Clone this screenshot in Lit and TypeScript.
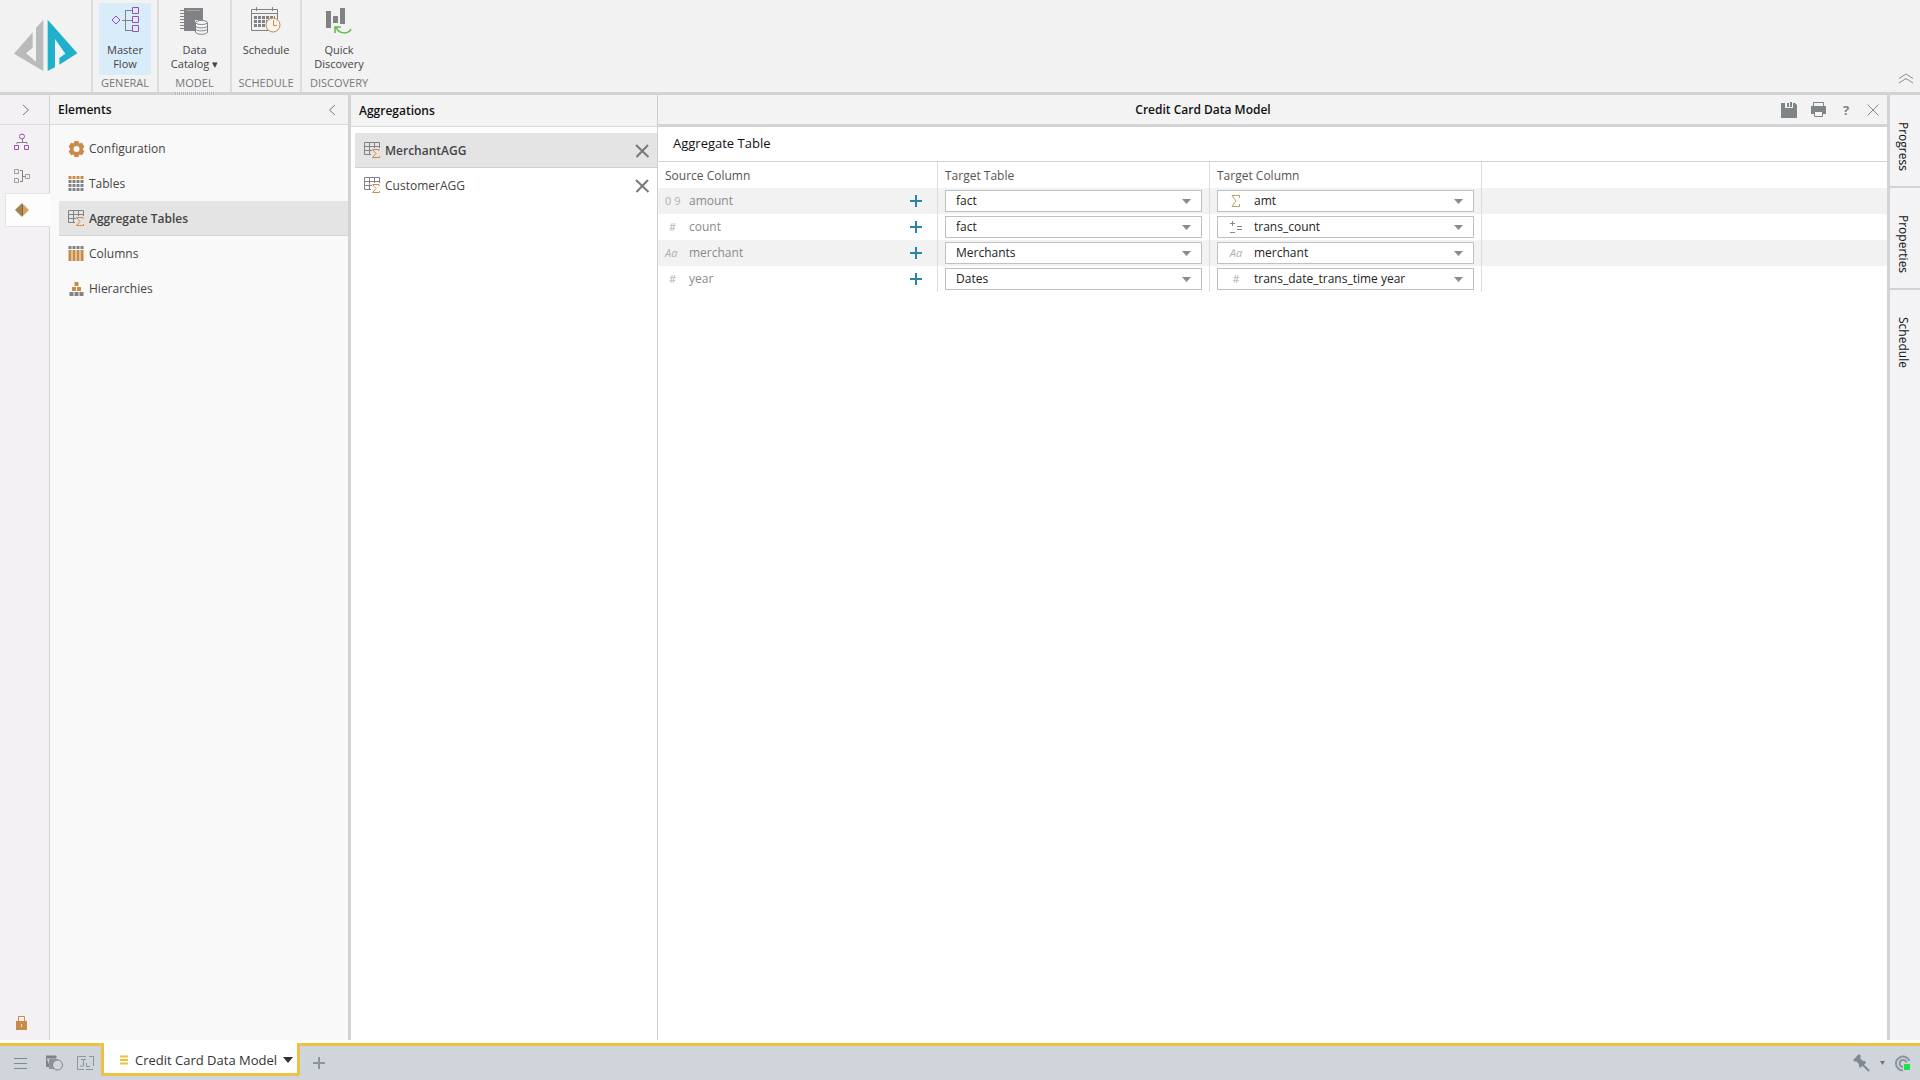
import { LitElement, html, css, svg, nothing } from "lit";
import { customElement, state } from "lit/decorators.js";
import { classMap } from "lit/directives/class-map.js";

const icon = (w: number, h: number, body: unknown) =>
  html`<svg width=${w} height=${h} viewBox="0 0 ${w} ${h}" fill="none" aria-hidden="true">${body}</svg>`;

const G = "#808285";
const O = "#c98b45";
const P = "#9c4fb0";

const logo = html`<svg width="64" height="54" viewBox="0 0 192 160" aria-hidden="true">
  <path fill="#b9babc" d="M0 106 L56 42 V88 L36 105 L66 130 V29 L88 4 V158 Z" />
  <path fill="#1fb1cb" d="M101 4 L190 105 L136 139 V119 L154 106 L123 62 V147 L101 158 Z" />
</svg>`;

const masterFlow = icon(28, 28, svg`
  <path d="M5 9 L9 13 L5 17 L1 13Z" stroke=${P} />
  <path d="M11 13.5H21M14.5 3V24M14 3.5H21M14 23.5H21" stroke=${G} />
  <path d="M21.500 .5h6v6h-6zM21.500 9.500h6v6h-6zM21.500 18.500h6v6h-6z" stroke=${P} />`);

const catalog = icon(30, 28, svg`
  <path d="M4 1H23V13H15V24H4Z" fill=${G} />
  <path d="M7 3.500H20" stroke="#a4a6a8" />
  <path d="M0 3.500H4M0 6.500H4M0 9.500H4M0 12.500H4M0 15.500H4M0 18.500H4M0 21.500H4" stroke=${G} />
  <path d="M15.500 15.500V25C16 28 27 28 27.500 25V15.500" fill="#f4f5f6" stroke=${G} />
  <ellipse cx="21.500" cy="15.500" rx="6" ry="2" fill="#f4f5f6" stroke=${G} />
  <path d="M15.500 19C16 21.500 27 21.500 27.500 19M15.500 22C16 24.500 27 24.500 27.500 22" stroke=${G} />`);

const calendar = icon(30, 26, svg`
  <path d="M.5 2.500H26.500V23.500H.5ZM.5 6.500H26.500M5.500 0V4M21.500 0V4" stroke=${G} />
  <path d="M3 10.500H24M3 14.500H24M3 18.500H18" stroke=${G} stroke-width="3" stroke-dasharray="3 1" />
  <circle cx="22" cy="18" r="7" fill="#f7f5f2" stroke=${O} />
  <path d="M22.500 13V18.500H26" stroke=${O} />`);

const discovery = icon(28, 28, svg`
  <path d="M1 4H6V21H1ZM8 9H13V16H8ZM15 1H20V17H15Z" fill=${G} />
  <path d="M11 20C14 28 24 27 26 22M10 26V20H16" stroke="#62b84a" stroke-width="1.500" />`);

const gear = icon(16, 16, svg`
  <path d="M6 0H10L10.800 2.500L13.500 1.800L15.800 5.500L14.200 8L15.800 10.500L13.500 14.200L10.800 13.500L10 16H6L5.200 13.500L2.500 14.200L.2 10.500L1.800 8L.2 5.500L2.500 1.800L5.200 2.500Z" fill=${O} />
  <circle cx="8" cy="8" r="3" fill="#fafafa" />`);

const grid = icon(16, 16, svg`
  <path d="M0 1.500H15" stroke=${O} stroke-width="3" stroke-dasharray="3 1" />
  <path d="M0 5.500H15M0 9.500H15M0 13.500H15" stroke=${G} stroke-width="3" stroke-dasharray="3 1" />`);

const aggTable = icon(17, 17, svg`
  <path d="M.5 .5H15.500V6M.5 .5V12.500H7M.5 4.500H15.500M.5 8.500H8M5.500 .5V12.500M10.500 .5V6" stroke=${G} />
  <path d="M15 9V7.500H8.500L12 11.500L8.500 15.500H15.500V14" stroke=${O} />`);

const columns = icon(16, 16, svg`
  <path d="M0 1.500H15" stroke=${G} stroke-width="3" stroke-dasharray="3 1" />
  <path d="M0 9.500H15" stroke=${O} stroke-width="11" stroke-dasharray="3 1" />`);

const hierarchy = icon(16, 16, svg`
  <path d="M6 1H10V5H6ZM3.500 6H7.500V10H3.500ZM8.500 6H12.500V10H8.500Z" fill=${O} />
  <path d="M1 11H5V15H1ZM6 11H10V15H6ZM11 11H15V15H11Z" fill=${G} />`);

const flowIcon = icon(16, 18, svg`
  <circle cx="8" cy="3.500" r="2.500" stroke=${P} />
  <path d="M8.500 6V9M3 11V9.500H13V11" stroke=${G} />
  <path d="M.5 12.500H4.500V16.500H.5ZM10.500 12.500H14.500V16.500H10.500Z" stroke=${P} />`);

const joinIcon = icon(17, 16, svg`
  <path d="M.5 1.500H4.500V5.500H.5ZM.5 10.500H4.500V14.500H.5ZM11.500 6.500H15.500V10.500H11.500Z" stroke="#a89a8c" />
  <path d="M6 2.500H8.500V13.500H6M8.500 8.500H11" stroke=${G} />`);

const modelIcon = icon(14, 14, svg`
  <path d="M7 0V14L0 7Z" fill="#a3824f" /><path d="M7 0L10 7L7 14Z" fill="#6b6a55" /><path d="M8 1L14 7L8 13Z" fill="#dba15c" />`);

const lock = icon(12, 14, svg`
  <path d="M2.500 5V.5H8.500V5" stroke=${O} /><path d="M0 5H11V14H0Z" fill=${O} /><path d="M5 8H6V11H5Z" fill="#f6e6d2" />`);

const cross = icon(15, 14, svg`
  <path d="M1 1L13.500 13M13 1L1.500 13" stroke="#77797b" stroke-width="2" />`);

const plus = icon(12, 12, svg`<path d="M6 0V12M0 6H12" stroke="#2c82ab" stroke-width="2" />`);
const caret = icon(9, 5, svg`<path d="M0 0H9L4.500 5Z" fill="#8b8b8b" />`);
const chevron = (d: string) => icon(8, 12, svg`<path d=${d} stroke="#77797b" />`);

const save = icon(17, 16, svg`
  <path d="M0 1H4V6H12V1H14L16 3V16H0Z" fill="#7d8587" /><path d="M6 1H8V5H6ZM9 0H11V5H9Z" fill="#7d8587" />`);
const print = icon(17, 15, svg`
  <path d="M3.500 4V.5H13.500V4" stroke="#7d8587" />
  <path d="M1 4H16V12H1Z" fill="#7d8587" /><path d="M4.500 9.500H12.500V14.500H4.500Z" fill="#f4f4f5" stroke="#7d8587" />`);

const windows = icon(17, 16, svg`
  <path d="M0 1H10V3H0ZM.5 3V11.500H4" stroke=${G} fill=${G} />
  <path d="M3 4H12V9L9 14H3Z" fill="#8d949c" />
  <circle cx="11.500" cy="10" r="5" fill="#d0d5dc" stroke=${G} />`);
const frame = icon(17, 15, svg`
  <path d="M.5 .5H9M12 .5H16.500V10M.5 .5V13.500H7M4 3.500H9M6.500 3.500V10H3M9.500 7V10.500H13M9 13.500H16" stroke="#8d949c" />`);
const pin = icon(18, 18, svg`
  <path d="M1 6L7 0L9 2L8 4L11 7L13 7L14 9L8 14L7 12V10L4 7L3 8Z" fill="#808891" />
  <path d="M11 11L17 17" stroke="#808891" stroke-width="2" />`);
const status = icon(16, 17, svg`
  <path d="M14.500 6A7 7 0 1 0 8 15.500M11.500 7.500A3.500 3.500 0 1 0 8 12" stroke="#8d949c" stroke-width="2" />
  <path d="M9 9H15V15H9Z" fill="#22e04a" />`);

const sigma = icon(10, 12, svg`<path d="M8.500 3V.5H1L5 6L1 11.500H8.500V9" stroke="#b5a567" />`);
const calc = icon(13, 12, svg`<path d="M2.500 0V5M0 2.500H5M0 11.500H5M7 5.500H12M7 8.500H12" stroke="#8f8778" />`);

const types: Record<string, unknown> = {
  num: html`<span class="glyph">0 9</span>`,
  hash: html`<span class="glyph hash">#</span>`,
  text: html`<span class="glyph slant">Aa</span>`,
  sum: sigma,
  calc,
};

const rows = [
  { name: "amount", type: "num", table: "fact", column: "amt", kind: "sum" },
  { name: "count", type: "hash", table: "fact", column: "trans_count", kind: "calc" },
  { name: "merchant", type: "text", table: "Merchants", column: "merchant", kind: "text" },
  { name: "year", type: "hash", table: "Dates", column: "trans_date_trans_time year", kind: "hash" },
];

const elements = [
  { label: "Configuration", icon: gear },
  { label: "Tables", icon: grid },
  { label: "Aggregate Tables", icon: aggTable },
  { label: "Columns", icon: columns },
  { label: "Hierarchies", icon: hierarchy },
];

const ribbon = [
  { group: "GENERAL", lines: ["Master", "Flow"], icon: masterFlow, active: true, menu: false },
  { group: "MODEL", lines: ["Data", "Catalog"], icon: catalog, active: false, menu: true },
  { group: "SCHEDULE", lines: ["Schedule"], icon: calendar, active: false, menu: false },
  { group: "DISCOVERY", lines: ["Quick", "Discovery"], icon: discovery, active: false, menu: false },
];

@customElement("app-root")
export class AppRoot extends LitElement {
  @state() private element = "Aggregate Tables";
  @state() private aggregation = "MerchantAGG";

  static styles = css`
    :host {
      --line: #d3d3d5;
      --bar: #f3f3f4;
      display: flex;
      flex-direction: column;
      height: 100vh;
      overflow: hidden;
      background: #fff;
      color: #333;
      font: 12px/16px "Open Sans", "Noto Sans", sans-serif;
    }
    * { box-sizing: border-box; }
    svg { display: block; flex: none; }
    button, select { font: inherit; color: inherit; }
    button { background: none; border: 0; padding: 0; cursor: pointer; }
    h1, h2, h3 { margin: 0; font-size: 12px; font-weight: 500; color: #111; }

    .ribbon { display: flex; height: 95px; background: #f2f2f3; border-bottom: 3px solid var(--line); flex: none; }
    .logo { width: 93px; padding: 18px 0 0 14px; border-right: 2px solid #dcdcdd; }
    .group { position: relative; display: flex; flex-direction: column; align-items: center; padding: 3px 4px 0; border-right: 2px solid #dcdcdd; }
    .group.w0 { width: 66px; }
    .group.w1 { width: 73px; }
    .group.w2 { width: 70px; }
    .group.w3 { width: 74px; border-right: 0; }
    .tool { display: flex; flex-direction: column; align-items: center; width: 52px; height: 72px; padding-top: 4px; font-size: 11px; line-height: 14px; color: #444; white-space: nowrap; }
    .tool.active { background: #d9ecfa; }
    .pic { height: 36px; }
    .group-name { font-size: 11px; line-height: 16px; color: #777; white-space: nowrap; }
    .fold { margin: auto 6px 0 auto; padding-bottom: 8px; }
    .grip { position: absolute; bottom: -3px; width: 40px; height: 3px; background: repeating-linear-gradient(90deg, #b5b5b7 0 1px, #e4e4e6 1px 2px); }

    .body { display: flex; flex: 1; min-height: 0; padding-bottom: 3px; }
    .rail { width: 50px; flex: none; display: flex; flex-direction: column; background: #f3f1f4; border-right: 1px solid var(--line); }
    .rail button { display: flex; align-items: center; height: 34px; padding-left: 14px; }
    .rail .open { height: 30px; padding-left: 22px; border-bottom: 1px solid #dedee0; }
    .rail .on { height: 34px; margin-left: 5px; padding-left: 9px; background: #fdfdfd; border: 1px solid #e4e4e6; border-right: 0; margin-right: -1px; }
    .rail .lock { margin-top: auto; padding-left: 16px; }

    .panel { display: flex; flex-direction: column; flex: none; }
    .elements { width: 301px; background: #f9f9fa; border-right: 3px solid var(--line); }
    .aggregations { width: 307px; background: #fff; border-right: 1px solid #cfcfd1; }
    .head { display: flex; align-items: center; justify-content: space-between; height: 30px; padding: 0 12px 0 8px; background: var(--bar); border-bottom: 1px solid #d8d8da; }
    .head h2 { font-weight: 600; }
    .aggregations .head { height: 32px; }
    .list { list-style: none; margin: 0; padding: 6px 0 0 9px; }
    .aggregations .list { padding-left: 4px; }
    .list li { display: flex; align-items: center; height: 35px; padding: 0 7px 0 9px; }
    .list li.on { background: #e4e4e5; box-shadow: inset 0 -1px #d2d2d4; font-weight: 600; }
    .pick { display: flex; align-items: center; gap: 4px; flex: 1; height: 100%; text-align: left; color: #444; }
    .pick svg { width: 17px; }

    .main { display: flex; flex-direction: column; flex: 1; min-width: 0; border-right: 3px solid var(--line); }
    .title { display: flex; align-items: center; height: 32px; background: var(--bar); border-bottom: 3px solid var(--line); }
    .title h1 { flex: 1; text-align: center; font-weight: 600; }
    .actions { display: flex; align-items: center; justify-content: flex-end; gap: 12px; width: 139px; padding-right: 8px; }
    .actions .help { width: 14px; margin-right: 2px; font-weight: 700; font-size: 13px; color: #7d8587; }
    .sub { height: 35px; padding: 8px 15px; border-bottom: 1px solid #d4d4d6; }
    .sub h3 { font-size: 13px; }
    table { width: 100%; border-collapse: separate; border-spacing: 0; table-layout: fixed; }
    .c1 { width: 280px; }
    .c2 { width: 272px; }
    th, td { padding: 0 7px; height: 26px; text-align: left; font-weight: 400; color: #555; border-right: 1px solid #dcdcde; }
    th { padding-top: 2px; }
    th:last-child, td:last-child { border-right: 0; }
    tbody tr:nth-child(odd) { background: #f2f2f3; }
    .source { display: flex; align-items: center; color: #8a8a8c; }
    .source .type { width: 24px; }
    .source .name { flex: 1; }
    .source button { padding-right: 8px; }
    .glyph { font-size: 11px; color: #b0b0b2; }
    .source .hash { padding-left: 4px; }
    .slant { font-style: italic; }
    .field { display: flex; align-items: center; position: relative; height: 22px; }
    .field select { appearance: none; width: 100%; height: 22px; padding: 0 24px 0 10px; border: 1px solid #bfc0c2; border-radius: 0; background: #fff; color: #222; }
    .field.typed select { padding-left: 36px; }
    .field .type { position: absolute; left: 12px; width: 14px; display: flex; justify-content: center; pointer-events: none; }
    .field .arrow { position: absolute; right: 11px; pointer-events: none; }

    .tabs { width: 30px; flex: none; display: flex; flex-direction: column; background: #f3f2f4; }
    .tabs button { writing-mode: vertical-rl; display: flex; align-items: center; width: 30px; padding: 27px 4px 15px 0; color: #111; }
    .tabs button + button { border-top: 2px solid var(--line); }

    .taskbar { display: flex; height: 37px; flex: none; background: #d0d5dc; }
    .left, .right { display: flex; align-items: center; border-top: 3px solid #eec044; }
    .left { width: 101px; gap: 18px; padding-left: 14px; border-top-right-radius: 3px; }
    .left button + button + button { margin-left: -4px; }
    .right { flex: 1; padding: 0 9px 0 13px; border-top-left-radius: 3px; }
    .right .end { display: flex; align-items: center; gap: 10px; margin-left: auto; }
    .doc { display: flex; align-items: center; gap: 6px; height: 33px; padding: 4px 4px 0 16px; background: #fff; border: 3px solid #eec044; border-top: 0; border-radius: 0 0 3px 3px; font-size: 13px; color: #333; white-space: nowrap; }
  `;

  private renderRibbon() {
    return html`<header class="ribbon">
      <div class="logo">${logo}</div>
      ${ribbon.map((r, i) => html`<div class="group w${i}">
        <button class=${classMap({ tool: true, active: r.active })}>
          <span class="pic">${r.icon}</span>
          ${r.lines.map((l, n) => html`<span>${l}${r.menu && n === 1 ? " ▾" : nothing}</span>`)}
        </button>
        <span class="group-name">${r.group}</span>
        ${r.menu ? html`<span class="grip"></span>` : nothing}
      </div>`)}
      <button class="fold" aria-label="Collapse ribbon">${icon(16, 11, svg`<path d="M1 5.500L8 1L15 5.500M1 10L8 5.500L15 10" stroke="#8b8b8d" />`)}</button>
    </header>`;
  }

  private renderSelect(value: string, options: string[], label: string, kind?: string) {
    return html`<div class=${classMap({ field: true, typed: !!kind })}>
      <select aria-label=${label}>${options.map((o) => html`<option ?selected=${o === value}>${o}</option>`)}</select>
      ${kind ? html`<span class="type">${types[kind]}</span>` : nothing}
      <span class="arrow">${caret}</span>
    </div>`;
  }

  private renderTable() {
    const tables = [...new Set(rows.map((r) => r.table))];
    const cols = rows.map((r) => r.column);
    return html`<table>
      <colgroup><col class="c1" /><col class="c2" /><col class="c2" /><col /></colgroup>
      <thead><tr><th>Source Column</th><th>Target Table</th><th>Target Column</th><th></th></tr></thead>
      <tbody>${rows.map((r) => html`<tr>
        <td><div class="source"><span class="type">${types[r.type]}</span><span class="name">${r.name}</span><button aria-label="Add ${r.name}">${plus}</button></div></td>
        <td>${this.renderSelect(r.table, tables, `Target table for ${r.name}`)}</td>
        <td>${this.renderSelect(r.column, cols, `Target column for ${r.name}`, r.kind)}</td>
        <td></td>
      </tr>`)}</tbody>
    </table>`;
  }

  render() {
    return html`
      ${this.renderRibbon()}
      <div class="body">
        <nav class="rail">
          <button class="open" aria-label="Expand">${chevron("M1 1L6.500 6L1 11")}</button>
          <button aria-label="Flow">${flowIcon}</button>
          <button aria-label="Joins">${joinIcon}</button>
          <button class="on" aria-label="Model">${modelIcon}</button>
          <button class="lock" aria-label="Lock">${lock}</button>
        </nav>
        <section class="panel elements">
          <div class="head"><h2>Elements</h2><button aria-label="Collapse">${chevron("M7 1L1.500 6L7 11")}</button></div>
          <ul class="list">${elements.map((e) => html`<li class=${classMap({ on: e.label === this.element })}>
            <button class="pick" @click=${() => (this.element = e.label)}>${e.icon}${e.label}</button></li>`)}</ul>
        </section>
        <section class="panel aggregations">
          <div class="head"><h2>Aggregations</h2></div>
          <ul class="list">${["MerchantAGG", "CustomerAGG"].map((a) => html`<li class=${classMap({ on: a === this.aggregation })}>
            <button class="pick" @click=${() => (this.aggregation = a)}>${aggTable}${a}</button>
            <button aria-label="Remove ${a}">${cross}</button></li>`)}</ul>
        </section>
        <main class="main">
          <div class="title">
            <h1>Credit Card Data Model</h1>
            <div class="actions">
              <button aria-label="Save">${save}</button>
              <button aria-label="Print">${print}</button>
              <button class="help">?</button>
              <button aria-label="Close">${icon(12, 12, svg`<path d="M.5 .5L11.500 11.500M11.500 .5L.5 11.500" stroke="#85878a" />`)}</button>
            </div>
          </div>
          <div class="sub"><h3>Aggregate Table</h3></div>
          ${this.renderTable()}
        </main>
        <aside class="tabs"><button>Progress</button><button>Properties</button><button>Schedule</button></aside>
      </div>
      <footer class="taskbar">
        <div class="left">
          <button aria-label="Menu">${icon(14, 12, svg`<path d="M0 1.500H13M0 6.500H13M0 11.500H13" stroke="#808891" />`)}</button>
          <button aria-label="Windows">${windows}</button>
          <button aria-label="Layout">${frame}</button>
        </div>
        <button class="doc">
          ${icon(9, 10, svg`<path d="M0 1.500H8M0 5H8M0 8.500H8" stroke="#eec23a" stroke-width="2" />`)}
          Credit Card Data Model
          ${icon(10, 6, svg`<path d="M0 0H10L5 6Z" fill="#333" />`)}
        </button>
        <div class="right">
          <button aria-label="New tab">${icon(12, 12, svg`<path d="M6 0V12M0 6H12" stroke="#8d949c" stroke-width="2" />`)}</button>
          <div class="end">
            <button aria-label="Pin">${pin}</button>
            ${icon(5, 4, svg`<path d="M0 0H5L2.500 4Z" fill="#6b727a" />`)}
            <button aria-label="Status">${status}</button>
          </div>
        </div>
      </footer>`;
  }
}
